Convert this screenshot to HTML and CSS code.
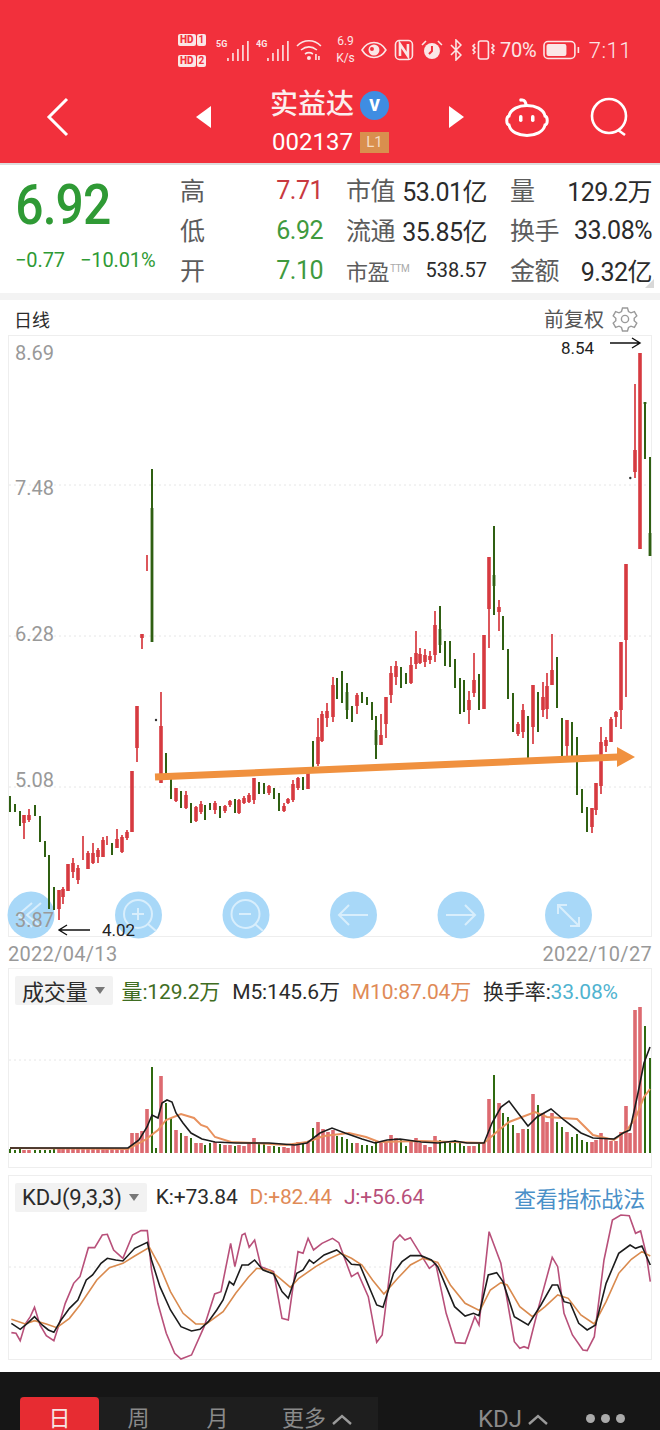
FILE: index.html
```html
<!DOCTYPE html>
<html lang="zh-CN">

<head>
	<meta charset="UTF-8">
	<meta name="viewport" content="width=device-width, initial-scale=1.0">
	<title>实益达 002137</title>
	<link rel="stylesheet" href="styles.css">
</head>

<body>

	<!-- Red top bar -->
	<header class="topbar">
		<div class="status">
			<div class="sim">
				<span class="sim-row"><b>HD</b><i>1</i></span>
				<span class="sim-row"><b>HD</b><i>2</i></span>
			</div>
			<svg class="signal" width="33" height="24" viewBox="0 0 33 24">
				<text x="0" y="9" class="net">5G</text>
				<path d="M12 23v-3M17 23v-8M22 23v-12M27 23v-16M32 23v-20" />
			</svg>
			<svg class="signal" width="33" height="24" viewBox="0 0 33 24">
				<text x="0" y="9" class="net">4G</text>
				<path d="M12 23v-3M17 23v-8M22 23v-12M27 23v-16M32 23v-20" />
			</svg>
			<svg class="ico wifi" width="26" height="22" viewBox="0 0 26 22">
				<path d="M1 7c7-7 17-7 24 0M5 11c5-4 11-4 16 0M9 15c3-2 5-2 8 0" />
				<circle cx="13" cy="19" r="2" class="solid" />
				<path d="M20 15v6M23 17v4" />
			</svg>
			<div class="speed"><span>6.9</span><span>K/s</span></div>
			<svg class="ico eye" width="26" height="20" viewBox="0 0 26 20">
				<path d="M1 10c6-10 18-10 24 0c-6 10-18 10-24 0z" />
				<circle cx="13" cy="10" r="5.5" class="solid" />
				<circle cx="11" cy="9" r="2" class="hole" />
			</svg>
			<svg class="ico nfc" width="20" height="22" viewBox="0 0 20 22">
				<rect x="1.500" y="1.500" width="17" height="19" rx="4" />
				<path d="M6 17V5l8 12V5" class="thick" />
			</svg>
			<svg class="ico alarm" width="22" height="22" viewBox="0 0 22 22">
				<circle cx="11" cy="12" r="8" class="solid" />
				<path d="M11 7v5l-3 3" class="hole-line" />
				<path d="M1 6l4-4M21 6l-4-4" />
			</svg>
			<svg class="ico bt" width="12" height="22" viewBox="0 0 12 22">
				<path d="M1 6l10 10-5 5V1l5 5L1 16" />
			</svg>
			<svg class="ico vibrate" width="27" height="20" viewBox="0 0 27 20">
				<rect x="8.500" y="1" width="10" height="18" rx="2" />
				<path d="M5 4l-2 2 2 2-2 2 2 2-2 2M22 4l2 2-2 2 2 2-2 2 2 2" />
			</svg>
			<span class="pct">70%</span>
			<svg class="ico battery" width="37" height="20" viewBox="0 0 37 20">
				<rect x="1" y="1.500" width="31" height="17" rx="4" />
				<rect x="3.500" y="4" width="20" height="12" rx="2" class="solid" />
				<path d="M35.500 7v6" />
			</svg>
			<span class="clock">7:11</span>
		</div>

		<nav class="nav">
			<svg class="back" width="24" height="40" viewBox="0 0 24 40">
				<path d="M21 2L3 20l18 18" />
			</svg>
			<span class="tri tri-left"></span>
			<div class="title">
				<div class="name-row">
					<span class="name">实益达</span>
					<span class="vbadge">V</span>
				</div>
				<div class="code-row">
					<span class="code">002137</span>
					<span class="level">L1</span>
				</div>
			</div>
			<span class="tri tri-right"></span>
			<svg class="bot" width="44" height="40" viewBox="0 0 44 40">
				<path d="M17 3c3 0 4 2 4 6" />
				<circle cx="16" cy="3" r="1.800" class="solid" />
				<path d="M4 19c3-14 33-14 36 0c3 1 3 8 0 9c-3 14-33 14-36 0c-3-1-3-8 0-9z" />
				<rect x="14" y="18" width="3.500" height="7" rx="1.700" class="solid" />
				<rect x="26" y="18" width="3.500" height="7" rx="1.700" class="solid" />
			</svg>
			<svg class="search" width="40" height="40" viewBox="0 0 40 40">
				<circle cx="19" cy="19" r="17" />
				<path d="M28 33l7 5" />
			</svg>
		</nav>
	</header>

	<!-- Quote summary -->
	<section class="quote">
		<div class="quote-main">
			<div class="price">6.92</div>
			<div class="change"><span>−0.77</span><span>−10.01%</span></div>
		</div>
		<div class="stats">
			<div class="stat"><span class="lbl">高</span><span class="up">7.71</span></div>
			<div class="stat"><span class="lbl">市值</span><span>53.01亿</span></div>
			<div class="stat"><span class="lbl">量</span><span>129.2万</span></div>
			<div class="stat"><span class="lbl">低</span><span class="down">6.92</span></div>
			<div class="stat"><span class="lbl">流通</span><span>35.85亿</span></div>
			<div class="stat"><span class="lbl">换手</span><span>33.08%</span></div>
			<div class="stat"><span class="lbl">开</span><span class="down">7.10</span></div>
			<div class="stat"><span class="lbl lbl-small">市盈<sup>TTM</sup></span><span class="small-val">538.57</span></div>
			<div class="stat"><span class="lbl">金额</span><span>9.32亿</span></div>
		</div>
		<span class="fold"></span>
	</section>

	<div class="chart-head">
		<span class="period">日线</span>
		<div class="adjust">
			<span>前复权</span>
			<svg class="gear" width="26" height="26" viewBox="0 0 26 26">
				<path d="M10.500 2h5l1 3.500 2.500 1.300 3.400-1.200 2.400 4.300-2.600 2.400v2.400l2.600 2.400-2.400 4.300-3.400-1.200-2.500 1.300-1 3.500h-5l-1-3.500-2.500-1.300-3.400 1.200-2.400-4.300 2.600-2.400v-2.400l-2.600-2.400 2.400-4.300 3.400 1.200 2.500-1.300z" />
				<circle cx="13" cy="13" r="3.600" />
			</svg>
		</div>
	</div>

	<!-- Candlestick chart: viewBox keeps page coordinates -->
	<div class="panel kline">
		<svg class="plot" width="642" height="600" viewBox="9 336 642 600">
			<path class="grid" d="M9 485H651M9 636H651M9 787H651" />

			<g class="tools">
				<circle cx="31" cy="915" r="23.500" />
				<circle cx="138.500" cy="915" r="23.500" />
				<circle cx="246" cy="915" r="23.500" />
				<circle cx="353.500" cy="915" r="23.500" />
				<circle cx="461" cy="915" r="23.500" />
				<circle cx="568.500" cy="915" r="23.500" />
				<path d="M32 903l-14 12 14 12M41 903l-14 12 14 12" />
				<circle cx="138" cy="914" r="14" />
				<path d="M132 914h12M138 908v12M148 924l8 7" />
				<circle cx="245.500" cy="914" r="14" />
				<path d="M239 914h12M255 924l8 7" />
				<path d="M368 915h-29M349 905l-10 10 10 10" />
				<path d="M446 915h29M465 905l10 10-10 10" />
				<path d="M558 905l21 21M558 914v-9h9M579 917v9h-9" />
			</g>

			<path class="wick-red" d="M24 815V839M29 809V822M59 890V920M63 887V904M68 864V891M73 858V878M78 865V884M83 836V860M88 851V869M93 843V864M98 848V863M103 837V857M107 836V845M117 829V848M122 835V853M127 830V840M132 771V832M137 706V762M142 634V649M147 555V571M161 692V783M176 788V802M186 791V809M196 806V822M201 801V814M215 801V814M225 805V813M230 800V807M239 799V814M244 796V804M249 793V803M254 778V804M269 785V795M284 803V812M288 798V804M293 780V802M298 777V790M308 772V789M318 718V766M322 711V742M327 703V727M333 677V722M357 693V714M381 714V745M386 697V738M391 666V703M396 661V685M411 657V684M416 631V669M420 648V664M425 649V667M430 651V664M435 611V662M469 691V724M474 653V697M484 635V709M489 557V648M499 600V631M518 722V736M523 704V738M533 685V744M543 682V717M547 673V719M552 634V685M567 720V757M592 808V833M596 783V815M601 727V794M606 737V752M611 717V742M616 711V727M621 642V729M626 564V697M635 384V478" />
			<path class="body-red" d="M24 815V823M29 815V820M59 890V909M63 889V897M68 864V891M73 863V872M78 868V880M88 853V869M93 853V863M98 850V857M103 840V857M117 839V848M122 837V852M127 832V838M132 771V832M137 706V748M142 634V638M161 726V783M176 788V801M186 795V808M196 807V821M201 804V812M215 803V810M225 806V811M230 801V805M239 800V813M244 798V803M249 795V802M254 778V800M269 786V793M284 806V811M288 799V803M293 784V800M298 778V788M308 772V789M318 737V764M322 714V741M327 711V718M333 685V717M357 695V706M381 735V745M386 697V724M391 673V695M396 666V677M411 665V683M416 653V664M420 654V663M425 655V662M430 656V660M435 625V655M469 700V710M474 680V693M484 635V709M489 557V609M499 607V612M518 724V734M523 710V732M533 685V727M543 697V710M547 686V709M552 670V685M567 720V746M592 808V827M596 783V810M601 742V786M606 740V746M611 719V742M616 712V717M621 642V710M626 564V640M635 450V472M640 353V549" />
			<path class="wick-green" d="M10 796V812M15 804V812M20 811V826M35 805V816M40 816V842M45 841V857M49 855V909M54 887V910M112 843V855M152 469V642M166 753V780M171 778V799M181 791V808M191 803V823M205 805V820M210 803V810M220 806V818M235 799V813M259 782V794M264 783V794M274 788V799M279 793V811M303 777V790M313 741V767M337 678V699M342 671V703M347 683V719M352 706V722M362 692V703M367 697V705M372 702V720M376 716V759M401 667V688M406 673V684M440 606V653M445 641V666M450 641V667M455 659V688M460 678V714M464 680V712M479 674V710M494 526V615M503 616V650M508 649V699M513 693V732M528 716V758M538 692V732M557 657V708M562 718V757M572 722V758M577 737V795M582 789V813M587 807V832M645 402V459M650 457V556" />
			<path class="body-green" d="M152 508V642M650 533V556M494 575V586M440 629V645M376 730V745M347 692V710M645 402V404" />
			<circle class="dot" cx="156" cy="720" r="1.200" />
			<circle class="dot" cx="630.300" cy="478" r="1.200" />

			<path class="trend" d="M155 777L618 757" />
			<path class="trend-head" d="M617 747L635 757L617 767Z" />

			<text class="axis" x="15" y="360">8.69</text>
			<text class="axis" x="15" y="495">7.48</text>
			<text class="axis" x="15" y="641">6.28</text>
			<text class="axis" x="15" y="787">5.08</text>
			<text class="axis" x="15" y="927">3.87</text>

			<text class="mark" x="561" y="354">8.54</text>
			<path class="arrow" d="M610 343H640M632 338L640 343L632 348" />
			<text class="mark" x="102" y="936">4.02</text>
			<path class="arrow" d="M90 930H59M67 925L59 930L67 935" />
		</svg>
	</div>

	<div class="dates">
		<span>2022/04/13</span>
		<span>2022/10/27</span>
	</div>

	<!-- Volume -->
	<div class="panel volume">
		<div class="ind-head">
			<span class="chip">成交量<i class="caret"></i></span>
			<span class="c-green">量:129.2万</span>
			<span>M5:145.6万</span>
			<span class="c-orange">M10:87.04万</span>
			<span>换手率:<em class="c-cyan">33.08%</em></span>
		</div>
		<svg class="plot" width="642" height="155" viewBox="9 1005 642 155">
			<path class="grid" d="M9 1060H651" />
			<path class="vol-red" d="M24 1153V1150M29 1153V1150M59 1153V1149M63 1153V1149M68 1153V1149M73 1153V1149M78 1153V1149M83 1153V1149M88 1153V1149M93 1153V1149M98 1153V1149M103 1153V1149M107 1153V1149M112 1153V1149M117 1153V1149M122 1153V1149M127 1153V1149M132 1153V1133M137 1153V1133M142 1153V1131M147 1153V1109M161 1153V1076M176 1153V1130M186 1153V1136M196 1153V1143M201 1153V1143M215 1153V1142M225 1153V1145M230 1153V1145M239 1153V1145M244 1153V1146M249 1153V1143M254 1153V1138M269 1153V1146M284 1153V1147M288 1153V1148M293 1153V1145M298 1153V1142M308 1153V1142M318 1153V1122M323 1153V1129M328 1153V1132M333 1153V1130M357 1153V1143M381 1153V1143M386 1153V1142M391 1153V1135M396 1153V1138M411 1153V1140M416 1153V1138M420 1153V1143M425 1153V1145M430 1153V1147M435 1153V1136M469 1153V1146M474 1153V1146M484 1153V1142M489 1153V1099M499 1153V1103M518 1153V1133M523 1153V1129M533 1153V1094M543 1153V1113M547 1153V1122M552 1153V1113M567 1153V1132M592 1153V1142M596 1153V1140M601 1153V1133M606 1153V1138M611 1153V1141M616 1153V1141M621 1153V1132M626 1153V1106M630 1153V1133M635 1153V1010M640 1153V1007" />
			<path class="vol-green" d="M10 1153V1149M15 1153V1150M20 1153V1149M35 1153V1150M40 1153V1150M45 1153V1150M50 1153V1150M54 1153V1149M152 1153V1067M156 1153V1148M166 1153V1103M171 1153V1118M181 1153V1133M191 1153V1138M205 1153V1145M210 1153V1143M220 1153V1144M235 1153V1146M259 1153V1144M264 1153V1144M274 1153V1146M279 1153V1147M303 1153V1142M313 1153V1128M337 1153V1136M342 1153V1137M347 1153V1139M352 1153V1143M362 1153V1145M367 1153V1145M372 1153V1146M376 1153V1141M401 1153V1139M406 1153V1146M440 1153V1140M445 1153V1142M450 1153V1141M455 1153V1140M460 1153V1142M464 1153V1146M479 1153V1142M494 1153V1075M503 1153V1113M508 1153V1117M513 1153V1125M528 1153V1129M538 1153V1105M557 1153V1122M562 1153V1127M572 1153V1137M577 1153V1134M582 1153V1140M587 1153V1142M645 1153V1026M650 1153V1058" />
			<polyline class="ma10" points="10,1148 128,1149 145,1140 158,1130 166,1120 181,1114 194,1118 201,1125 207,1127 215,1137 231,1142 253,1143 286,1145 307,1142 324,1136 349,1133 366,1137 379,1142 421,1141 484,1143 499,1130 509,1122 535,1112 547,1117 577,1119 593,1135 614,1140 627,1130 636,1117 644,1097 650,1089" />
			<polyline class="ma5" points="10,1148 128,1148 139,1140 147,1127 152,1115 158,1118 162,1103 167,1100 172,1102 176,1113 183,1123 191,1133 202,1139 215,1142 236,1143 269,1143 295,1145 307,1143 320,1133 332,1128 345,1133 362,1139 375,1143 387,1140 400,1139 421,1142 438,1143 455,1141 467,1143 484,1143 492,1123 501,1107 509,1101 518,1113 528,1126 537,1117 551,1109 564,1120 581,1133 593,1138 614,1139 623,1133 630,1130 638,1093 644,1063 650,1047" />
		</svg>
	</div>

	<!-- KDJ: curve points are kept in a 2.376 x 3 scaled space -->
	<div class="panel kdj">
		<div class="ind-head">
			<span class="chip">KDJ(9,3,3)<i class="caret"></i></span>
			<span>K:+73.84</span>
			<span class="c-orange">D:+82.44</span>
			<span class="c-purple">J:+56.64</span>
			<span class="c-blue">查看指标战法</span>
		</div>
		<svg class="plot" width="642" height="146" viewBox="9 1213 642 146">
			<path class="grid" d="M9 1267H651" />
			<g transform="translate(0 1170) scale(.4209 .3333)">
				<polyline class="j-line" points="27,488 38,490 48,512 60,462 72,440 82,412 95,465 110,497 128,512 140,465 155,400 175,340 190,320 210,233 225,233 243,195 255,193 270,240 292,265 315,195 335,182 350,182 360,300 375,400 395,490 415,550 430,567 455,555 485,470 510,372 525,365 548,220 558,290 575,195 582,190 592,232 605,210 620,290 650,305 670,445 685,450 708,245 720,250 732,205 745,240 765,220 790,205 805,218 835,320 850,308 875,380 895,517 908,495 935,215 950,195 962,210 975,203 1020,295 1035,280 1060,430 1082,518 1105,520 1128,440 1138,465 1162,185 1190,280 1222,515 1235,535 1245,530 1255,535 1280,410 1312,262 1325,290 1340,430 1360,495 1385,540 1395,542 1412,500 1435,270 1455,150 1475,135 1495,137 1510,190 1522,183 1535,250 1545,335" />
				<polyline class="d-line" points="27,448 60,462 82,452 110,462 135,473 165,445 190,405 230,330 260,293 292,280 320,258 355,232 380,290 405,365 435,430 465,462 490,462 530,425 560,370 590,322 610,295 640,300 665,325 690,352 710,325 750,290 780,268 810,250 835,265 860,285 885,330 912,372 945,325 975,285 1005,265 1040,277 1070,345 1105,400 1140,422 1165,360 1190,338 1205,345 1235,410 1265,440 1295,410 1325,375 1350,385 1380,435 1412,462 1440,395 1470,310 1500,268 1525,245 1545,258" />
				<polyline class="k-line" points="27,460 48,478 65,460 82,440 100,465 115,480 128,487 145,450 165,415 185,390 205,330 220,315 240,280 255,265 275,270 292,273 320,235 350,217 360,270 380,350 405,420 430,470 455,483 475,478 495,455 515,420 530,390 545,335 555,345 575,285 590,285 605,270 625,300 650,312 670,365 685,385 705,310 720,300 735,270 745,280 770,255 800,240 815,255 835,283 855,285 880,360 895,405 910,412 935,310 955,275 975,257 1000,257 1025,270 1040,290 1060,350 1080,410 1105,438 1125,430 1138,437 1160,315 1180,308 1195,335 1222,440 1255,465 1285,405 1312,345 1325,345 1340,395 1355,400 1375,460 1395,480 1415,465 1440,340 1470,250 1497,225 1510,235 1525,228 1545,285" />
			</g>
		</svg>
	</div>

	<!-- Dark period bar -->
	<footer class="tabs">
		<div class="tab-group">
			<span class="tab active">日</span>
			<span class="tab">周</span>
			<span class="tab">月</span>
			<span class="tab more">更多
				<svg width="22" height="12" viewBox="0 0 22 12"><path d="M2 11l9-8 9 8" /></svg>
			</span>
		</div>
		<span class="tab more kdj-tab">KDJ
			<svg width="22" height="12" viewBox="0 0 22 12"><path d="M2 11l9-8 9 8" /></svg>
		</span>
		<span class="dots"><i></i><i></i><i></i></span>
	</footer>

</body>

</html>
```

FILE: styles.css
```css
html,
body {
	height: 1430px;
}

body {
	margin: 0;
	overflow: hidden;
	background-color: #fff;
	font-family: Roboto, "Noto Sans CJK SC", sans-serif;
	color: #2b2b2b;
}

svg {
	display: block;
	fill: none;
}

/* Top bar */
.topbar {
	height: 163px;
	background-color: #f2303c;
	color: #fff;
	border-bottom: 2px solid #ddd;
}

.status {
	display: flex;
	align-items: center;
	height: 36px;
	padding: 32px 28px 0 178px;
	color: #fbe6e6;
}

.status svg {
	stroke: #fbe6e6;
	stroke-width: 1.6;
}

.status .solid {
	fill: #fbe6e6;
	stroke: none;
}

.status .hole {
	fill: #f2303c;
	stroke: none;
}

.status .hole-line {
	stroke: #f2303c;
	stroke-width: 2;
}

.status .thick {
	stroke-width: 2.6;
}

.sim {
	display: flex;
	flex-direction: column;
	gap: 9px;
	width: 38px;
}

.sim-row {
	display: flex;
	gap: 1px;
	font-size: 10px;
	line-height: 12px;
	font-weight: 700;
}

.sim-row b {
	padding: 0 2px;
	border-radius: 2px;
	background-color: #fbe6e6;
	color: #f2303c;
}

.sim-row i {
	font-style: normal;
	padding: 0 2px;
	border-radius: 2px;
	background-color: #fbe6e6;
	color: #f2303c;
}

.signal {
	margin-right: 7px;
	stroke-width: 2.4;
}

.signal .net {
	font-size: 9px;
	font-weight: 700;
	fill: #fbe6e6;
	stroke: none;
}

.wifi {
	margin-right: 8px;
}

.speed {
	display: flex;
	flex-direction: column;
	width: 32px;
	font-size: 12px;
	line-height: 17px;
	text-align: center;
}

.eye {
	margin-right: 7px;
}

.nfc {
	margin-right: 7px;
}

.alarm {
	margin-right: 7px;
}

.bt {
	margin-right: 8px;
}

.vibrate {
	margin-right: 3px;
}

.pct {
	width: 43px;
	font-size: 20px;
	letter-spacing: -0.3px;
}

.battery {
	margin-right: 9px;
}

.clock {
	font-size: 22px;
	font-weight: 300;
	letter-spacing: 0.5px;
}

.nav {
	display: flex;
	align-items: center;
	height: 62px;
	margin-top: 18px;
	padding-left: 46px;
}

.back {
	stroke: #fff;
	stroke-width: 3;
	margin-right: 126px;
}

.tri {
	width: 0;
	height: 0;
	border-top: 11px solid transparent;
	border-bottom: 11px solid transparent;
}

.tri-left {
	border-right: 15px solid #fff;
	margin-right: 59px;
}

.tri-right {
	border-left: 15px solid #fff;
	margin-left: 0;
	margin-right: 41px;
}

.title {
	width: 179px;
	padding-top: 10px;
}

.name-row,
.code-row {
	display: flex;
	align-items: center;
}

.code-row {
	margin-top: 4px;
}

.name {
	font-size: 28px;
	line-height: 36px;
	font-weight: 500;
	color: #fbeeee;
}

.vbadge {
	width: 29px;
	height: 29px;
	margin-left: 6px;
	border-radius: 50%;
	background-color: #3f8de2;
	color: #fff;
	font-size: 16px;
	font-weight: 900;
	line-height: 29px;
	text-align: center;
}

.code {
	font-size: 24px;
	line-height: 30px;
	margin-left: 2px;
}

.level {
	width: 29px;
	height: 21px;
	margin-left: 7px;
	background-color: #d98f4e;
	color: #f7dcc2;
	font-size: 15px;
	line-height: 21px;
	text-align: center;
}

.bot {
	stroke: #fff;
	stroke-width: 3;
	margin-right: 41px;
}

.bot .solid {
	fill: #fff;
	stroke: none;
}

.search {
	stroke: #fff;
	stroke-width: 2.6;
}

/* Quote */
.quote {
	position: relative;
	display: flex;
	height: 123px;
	padding-top: 5px;
	border-bottom: 7px solid #f3f3f3;
}

.quote-main {
	width: 165px;
	padding-left: 15px;
	color: #2f9a35;
}

.price {
	font-size: 56px;
	line-height: 70px;
	font-weight: 500;
	letter-spacing: -1px;
	transform: scaleX(0.89);
	transform-origin: 2px 0;
}

.change {
	display: flex;
	gap: 15px;
	margin-top: 5px;
	font-size: 20px;
	line-height: 30px;
	letter-spacing: -0.1px;
}

.stats {
	display: grid;
	grid-template-columns: 143px 141px 142px;
	grid-auto-rows: 40px;
	column-gap: 23px;
}

.stat {
	display: flex;
	align-items: center;
	justify-content: space-between;
	font-size: 25px;
	letter-spacing: -0.5px;
}

.lbl {
	padding-bottom: 3px;
	color: #5c5c5c;
}

.lbl-small {
	font-size: 22px;
	padding-bottom: 0;
}

.lbl-small sup {
	font-size: 10px;
	color: #aaa;
	vertical-align: 8px;
	line-height: 0;
	margin-left: 1px;
}

.small-val {
	font-size: 20px;
	letter-spacing: 0;
}

.up {
	color: #c8393f;
}

.down {
	color: #3f9a3e;
}

.fold {
	position: absolute;
	right: 6px;
	bottom: 5px;
	width: 0;
	height: 0;
	border-left: 9px solid transparent;
	border-bottom: 9px solid #d8d8d8;
}

/* Chart head */
.chart-head {
	display: flex;
	align-items: center;
	justify-content: space-between;
	height: 35px;
	padding: 2px 22px 0 14px;
	box-sizing: border-box;
}

.period {
	font-size: 18px;
}

.adjust {
	display: flex;
	align-items: center;
	gap: 8px;
	font-size: 20px;
	color: #555;
}

.gear {
	stroke: #9a9a9a;
	stroke-width: 1.4;
}

/* Panels */
.panel {
	margin: 0 8px;
	border: 1px solid #eee;
}

.kline {
	height: 600px;
}

.plot {
	overflow: visible;
}

.grid {
	stroke: #e6e6e6;
	stroke-width: 1;
	stroke-dasharray: 2 3;
}

.tools circle {
	fill: #a8d8f8;
	stroke: none;
}

.tools circle:nth-child(n+7) {
	fill: none;
	stroke: #d8eefc;
	stroke-width: 2;
}

.tools path {
	stroke: #d8eefc;
	stroke-width: 2;
}

.wick-red {
	stroke: #d63a40;
	stroke-width: 1.7;
}

.body-red {
	stroke: #d63a40;
	stroke-width: 3.6;
}

.wick-green {
	stroke: #2f5f12;
	stroke-width: 2;
}

.body-green {
	stroke: #2f5f12;
	stroke-width: 2.8;
}

.dot {
	fill: #333;
}

.trend {
	stroke: #f0913f;
	stroke-width: 7;
}

.trend-head {
	fill: #f0913f;
}

.axis {
	font-size: 20px;
	fill: #999;
}

.mark {
	font-size: 17px;
	fill: #222;
}

.arrow {
	stroke: #111;
	stroke-width: 1.4;
}

.dates {
	display: flex;
	justify-content: space-between;
	height: 31px;
	padding: 0 8px;
	font-size: 20px;
	line-height: 34px;
	letter-spacing: 0.3px;
	color: #999;
	box-sizing: border-box;
}

.volume {
	height: 200px;
	box-sizing: border-box;
}

.ind-head {
	display: flex;
	align-items: center;
	height: 36px;
	padding: 6px 0 0 6px;
	box-sizing: border-box;
	font-size: 21px;
	letter-spacing: -0.15px;
	gap: 12px;
}

.chip {
	display: flex;
	align-items: center;
	gap: 7px;
	height: 29px;
	margin-right: -3px;
	padding: 0 8px 0 7px;
	background-color: #f2f2f2;
	font-size: 22px;
	border-radius: 2px;
}

.caret {
	width: 0;
	height: 0;
	border-left: 5px solid transparent;
	border-right: 5px solid transparent;
	border-top: 7px solid #777;
}

em {
	font-style: normal;
}

.c-green {
	color: #3f6d22;
}

.c-orange {
	color: #e08a57;
}

.c-cyan {
	color: #4fb3d0;
}

.c-purple {
	color: #b8507a;
}

.c-blue {
	margin-left: auto;
	margin-right: 6px;
	font-size: 22px;
	color: #4a90c8;
}

.vol-red {
	stroke: #dd6a70;
	stroke-width: 3.6;
}

.vol-green {
	stroke: #2f6a10;
	stroke-width: 2;
}

.ma5,
.ma10,
.j-line,
.k-line,
.d-line {
	fill: none;
	stroke-width: 1.6;
	vector-effect: non-scaling-stroke;
}

.ma5 {
	stroke: #1c1c1c;
}

.ma10 {
	stroke: #e8915e;
	stroke-width: 2;
}

.kdj {
	height: 185px;
	margin-top: 7px;
	box-sizing: border-box;
}

.kdj .plot {
	margin-top: 1px;
}

.j-line {
	stroke: #b8507a;
}

.k-line {
	stroke: #1c1c1c;
}

.d-line {
	stroke: #d98a4e;
}

/* Footer */
.tabs {
	display: flex;
	align-items: flex-start;
	height: 58px;
	margin-top: 12px;
	padding: 25px 0 0 20px;
	box-sizing: border-box;
	background-color: #161616;
	color: #8a8a8a;
	font-size: 22px;
	overflow: hidden;
}

.tab-group {
	display: flex;
	width: 358px;
	height: 40px;
	background-color: #1e1e1e;
}

.tab {
	width: 79px;
	padding-top: 7px;
	text-align: center;
	line-height: 30px;
}

.active {
	height: 40px;
	background-color: #e72c32;
	border-radius: 4px 4px 0 0;
	color: #f6e4e4;
}

.more {
	display: flex;
	align-items: center;
	gap: 5px;
	width: auto;
	height: 30px;
	margin-left: 25px;
}

.more svg {
	stroke: #9a9a9a;
	stroke-width: 2.4;
}

.kdj-tab {
	height: 22px;
	margin: 11px 0 0 100px;
	padding-top: 0;
	font-size: 24px;
	line-height: 22px;
}

.dots {
	display: flex;
	gap: 6px;
	margin: 17px 0 0 37px;
}

.dots i {
	width: 9px;
	height: 9px;
	border-radius: 50%;
	background-color: #aaa;
}
```
